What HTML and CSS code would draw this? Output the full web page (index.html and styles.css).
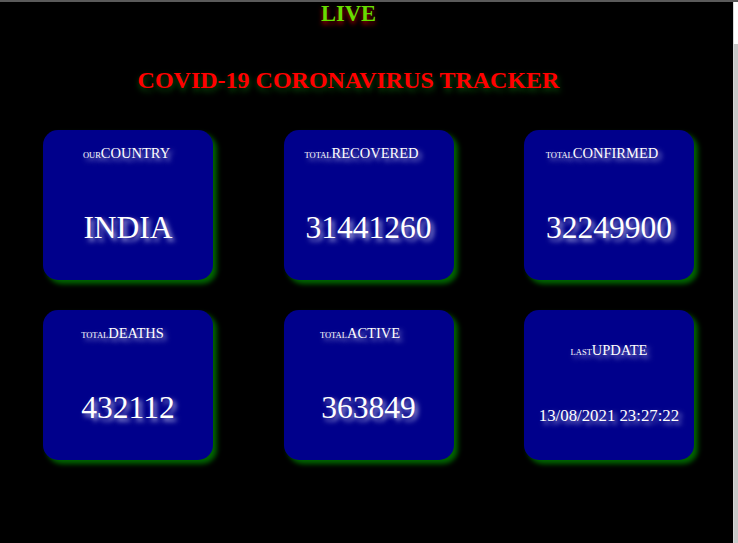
FILE: index.html
```html
<!DOCTYPE html>
<html lang="en">
<head>
<meta charset="utf-8">
<title>COVID-19 Coronavirus Tracker</title>
<link rel="stylesheet" href="styles.css">
</head>
<body>
<div class="topline"></div>
<div class="scrollbar"><div class="scrollbar__track"></div></div>
<header class="header">
  <h1 class="live">LIVE</h1>
  <h2 class="title">COVID-19 CORONAVIRUS TRACKER</h2>
</header>
<main class="grid">
  <div class="card">
    <p class="label label--first"><span class="small">our</span>COUNTRY</p>
    <p class="value">INDIA</p>
  </div>
  <div class="card">
    <p class="label"><span class="small">total</span>RECOVERED</p>
    <p class="value">31441260</p>
  </div>
  <div class="card">
    <p class="label"><span class="small">total</span>CONFIRMED</p>
    <p class="value">32249900</p>
  </div>
  <div class="card">
    <p class="label label--deaths"><span class="small">total</span>DEATHS</p>
    <p class="value">432112</p>
  </div>
  <div class="card">
    <p class="label label--active"><span class="small">total</span>ACTIVE</p>
    <p class="value">363849</p>
  </div>
  <div class="card card--update">
    <p class="label label--update"><span class="small">last</span>UPDATE</p>
    <p class="value value--date">13/08/2021 23:27:22</p>
  </div>
</main>
</body>
</html>
```
FILE: styles.css
```css
html, body {
  margin: 0;
  padding: 0;
  background: #000;
  height: 100%;
  overflow: hidden;
}
body {
  font-family: "Liberation Serif", "Times New Roman", serif;
  color: #fff;
  width: 734px;
}
.topline {
  position: fixed;
  top: 0;
  left: 0;
  right: 0;
  height: 2px;
  background: #5a5a5a;
  z-index: 2;
}
.scrollbar {
  position: fixed;
  top: 2px;
  right: 0;
  bottom: 0;
  width: 4px;
  background: #fff;
  border-left: 1px solid #d8d8d8;
}
.scrollbar__track {
  margin-top: 42px;
  height: 100%;
  background: #c8c8c8;
}
.header {
  display: flex;
  flex-direction: column;
  align-items: center;
  padding-right: 37px;
}
.live {
  margin: 1px 0 0;
  font-size: 22.5px;
  font-weight: bold;
  color: #66dd00;
  text-shadow: 0 3px 5px #b00000;
  line-height: 26px;
}
.title {
  margin: 40px 0 0;
  font-size: 24px;
  font-weight: bold;
  color: #ff0000;
  text-shadow: 1px 3px 6px #0b5a0b;
  line-height: 27px;
}
.grid {
  display: grid;
  grid-template-columns: repeat(3, 170px);
  grid-auto-rows: 150px;
  column-gap: 70.5px;
  row-gap: 30px;
  padding-left: 43px;
  margin-top: 36px;
}
.card {
  background: #00008b;
  border-radius: 15px;
  box-shadow: 4px 4px 5px #006400;
  display: flex;
  flex-direction: column;
  align-items: center;
  text-align: center;
  text-shadow: 3px 3px 5px rgba(235, 235, 255, 0.75);
}
.label {
  margin: 15px 0 0;
  font-size: 14.5px;
  line-height: 16px;
  padding-right: 14px;
}
.label--first { padding-right: 3px; }
.label--deaths { padding-right: 11px; }
.label--active { padding-right: 17px; }
.label--update { margin-top: 32px; padding-right: 0; }
.small {
  font-size: 8.5px;
  line-height: 0;
  text-transform: uppercase;
}
.value {
  margin: 50px 0 0;
  font-size: 31.5px;
  line-height: 33px;
}
.value--date {
  margin-top: 48px;
  font-size: 16.8px;
  line-height: 19px;
}
```
